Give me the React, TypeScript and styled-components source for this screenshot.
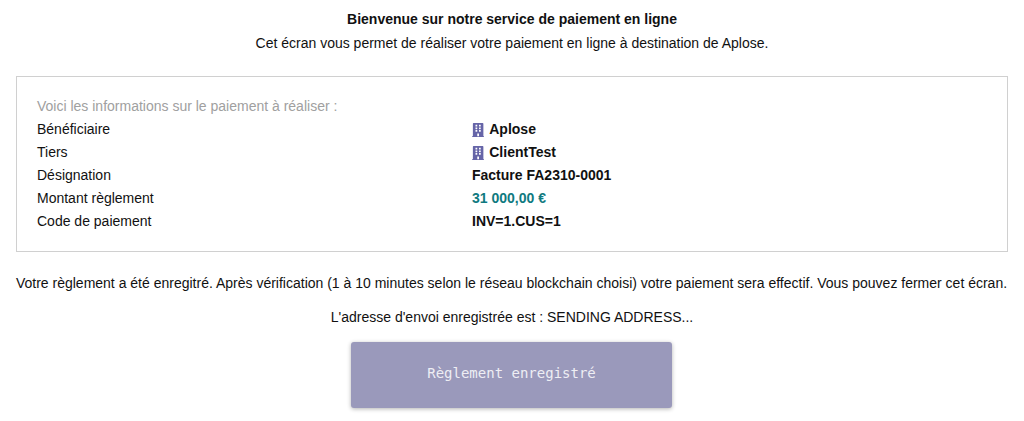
import React from "react";
import styled, { createGlobalStyle } from "styled-components";
import { FaBuilding } from "react-icons/fa";

const GlobalStyle = createGlobalStyle`
  html, body {
    margin: 0;
    padding: 0;
    background: #fff;
  }
  body {
    font-family: "Liberation Sans", Arial, sans-serif;
    font-size: 14px;
    color: #111;
  }
`;

const Page = styled.div`
  display: flex;
  flex-direction: column;
  align-items: center;
  padding: 8px 16px 0;
  height: 421px;
  box-sizing: border-box;
  overflow: hidden;
`;

const Title = styled.div`
  font-weight: 700;
  line-height: 23px;
  text-align: center;
`;

const Intro = styled.div`
  line-height: 23px;
  margin-top: 1px;
  text-align: center;
`;

const InfoBox = styled.div`
  align-self: stretch;
  box-sizing: border-box;
  height: 176px;
  margin-top: 21px;
  padding: 18px 20px;
  border: 1px solid #d0d0d0;
`;

const Hint = styled.div`
  color: #a0a0a0;
  line-height: 23px;
`;

const Row = styled.div`
  display: grid;
  grid-template-columns: 435px 1fr;
  line-height: 23px;
`;

const Value = styled.div<{ $amount?: boolean }>`
  display: flex;
  align-items: center;
  gap: 5px;
  font-weight: 700;
  color: ${(p) => (p.$amount ? "#0f7a80" : "#111")};
`;

const CompanyIcon = styled(FaBuilding)`
  flex: none;
  width: 12.25px;
  height: 14px;
  color: #6665a8;
`;

const Notice = styled.div`
  line-height: 23px;
  margin-top: 20px;
  text-align: center;
  white-space: nowrap;
  transform: translateX(-0.5px);
`;

const Address = styled.div`
  line-height: 23px;
  margin-top: 11px;
  text-align: center;
`;

const SubmitButton = styled.div`
  display: flex;
  align-items: center;
  justify-content: center;
  box-sizing: border-box;
  width: 321px;
  height: 66px;
  margin: 13px 1px 0 0;
  padding-bottom: 4px;
  border-radius: 3px;
  background: #9a99bb;
  box-shadow: 0 1px 4px rgba(0, 0, 0, 0.3);
  color: #eeeef4;
  font-family: "DejaVu Sans Mono", monospace;
  font-size: 14px;
`;

export default function App() {
  return (
    <>
      <GlobalStyle />
      <Page>
        <Title>Bienvenue sur notre service de paiement en ligne</Title>
        <Intro>Cet écran vous permet de réaliser votre paiement en ligne à destination de Aplose.</Intro>
        <InfoBox>
          <Hint>Voici les informations sur le paiement à réaliser :</Hint>
          <Row>
            <div>Bénéficiaire</div>
            <Value><CompanyIcon />Aplose</Value>
          </Row>
          <Row>
            <div>Tiers</div>
            <Value><CompanyIcon />ClientTest</Value>
          </Row>
          <Row>
            <div>Désignation</div>
            <Value>Facture FA2310-0001</Value>
          </Row>
          <Row>
            <div>Montant règlement</div>
            <Value $amount>31 000,00 €</Value>
          </Row>
          <Row>
            <div>Code de paiement</div>
            <Value>INV=1.CUS=1</Value>
          </Row>
        </InfoBox>
        <Notice>
          Votre règlement a été enregitré. Après vérification (1 à 10 minutes selon le réseau blockchain choisi) votre paiement sera effectif. Vous pouvez fermer cet écran.
        </Notice>
        <Address>L'adresse d'envoi enregistrée est : SENDING ADDRESS...</Address>
        <SubmitButton>Règlement enregistré</SubmitButton>
      </Page>
    </>
  );
}
